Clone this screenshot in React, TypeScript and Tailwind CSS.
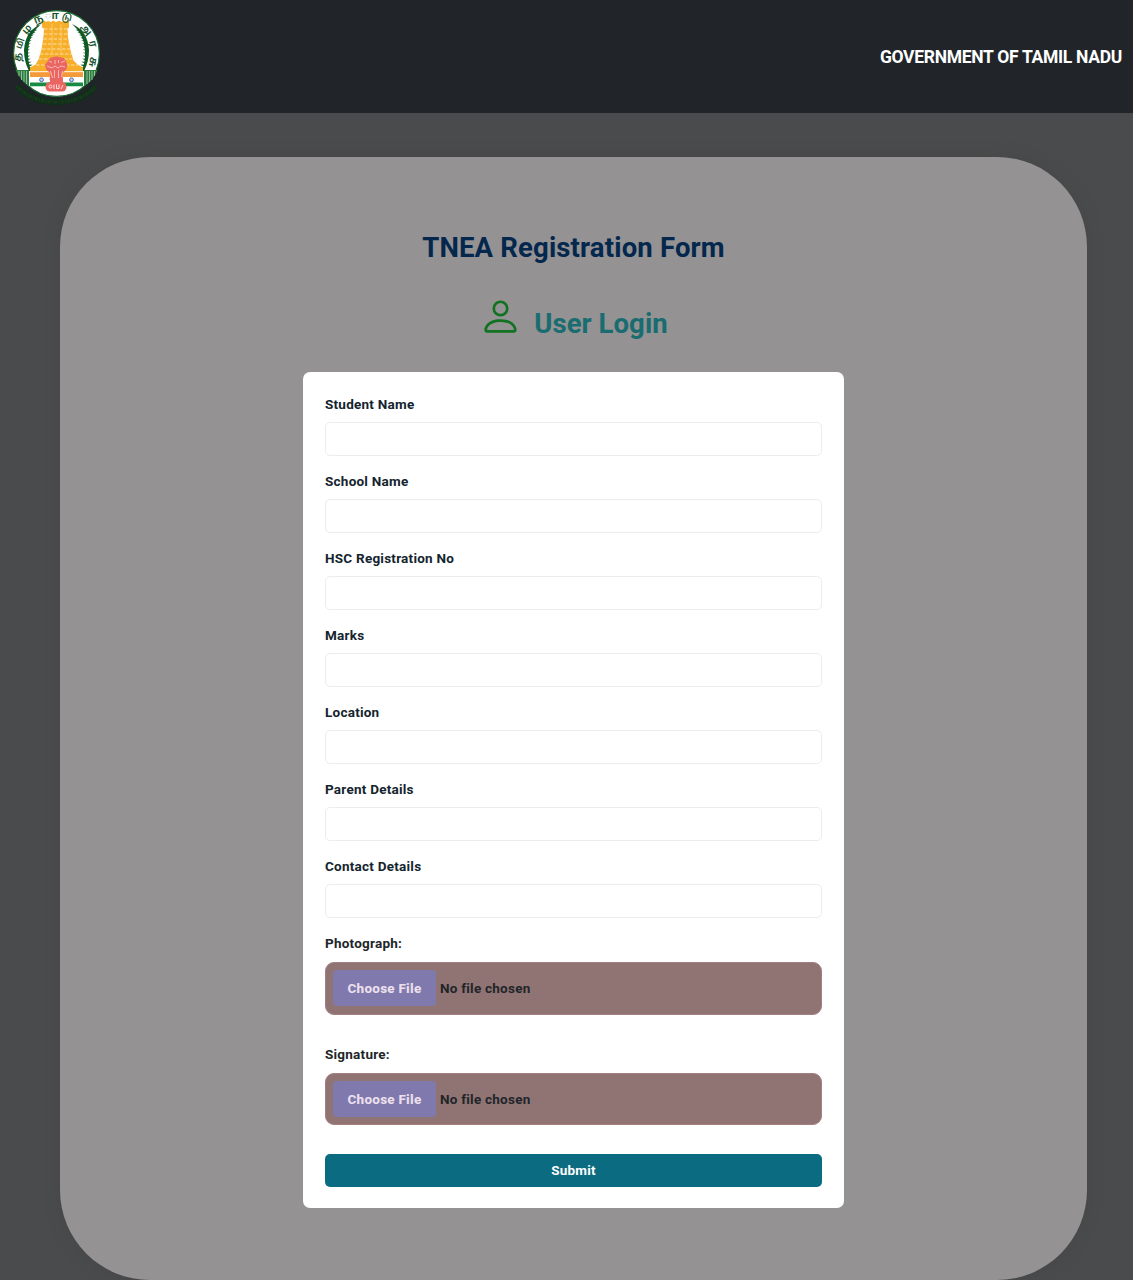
import React from "react";
import { BsPerson } from "react-icons/bs";

const fields = [
  "Student Name",
  "School Name",
  "HSC Registration No",
  "Marks",
  "Location",
  "Parent Details",
  "Contact Details",
];

const letters = [
  { t: "த", x: 18, y: 57, r: -85, s: 10 },
  { t: "மி", x: 20, y: 43.5, r: -68, s: 9 },
  { t: "ழ", x: 27, y: 29.5, r: -48, s: 10 },
  { t: "ந", x: 38.5, y: 19.5, r: -22, s: 11 },
  { t: "ா", x: 52, y: 15.5, r: 0, s: 11 },
  { t: "டு", x: 67, y: 17.5, r: 15, s: 9 },
  { t: "அ", x: 86, y: 30, r: 48, s: 10 },
  { t: "ர", x: 93, y: 44, r: 75, s: 10 },
  { t: "சு", x: 92.5, y: 62, r: 100, s: 11 },
];

function leaves(side: number) {
  const out = [];
  for (let i = 0; i < 14; i++) {
    const a = ((-42 + i * 5.6) * Math.PI) / 180;
    const x = 56.5 + side * 29 * Math.cos(a);
    const y = 52 + 32 * Math.sin(a);
    out.push(`M${x + side * 2} ${y + 1.3}l${-side * 4.5} -2.2l${side * 4.8} -.2z`);
  }
  return out.join("");
}

function Emblem() {
  return (
    <svg width="113" height="113" viewBox="0 0 113 113" className="shrink-0" aria-label="Emblem">
      <path d="M17 86Q31 102 56.5 102Q82 102 96 86" fill="none" stroke="#132c1b" strokeWidth="7" />
      <path d="M17 86Q31 102 56.5 102Q82 102 96 86" fill="none" stroke="#163a1b" strokeWidth="3.500" strokeDasharray="1.500 1 3 1" />
      <circle cx="56.5" cy="53.5" r="42.9" fill="#fff" stroke="#1b6b30" strokeWidth="1.2" />
      <path d="M15.500 70H29v16q-9-6-13.500-16zM84 70h13.500q-4 11-13.500 16z" fill="#2b7c3e" />
      <path d="M19 71v5M21.500 71v9M24 71v11M26.500 71v13M87 71v13M89.500 71v11M92 71v9M94.500 71v5" stroke="#c0dac6" strokeWidth=".7" />
      <path d="M41 24Q25 31 24 50Q24 62 29 71H31Q27.500 62 28 50Q29 34 41 24zM72 24Q88 31 89 50Q89 62 84 71H82Q85.500 62 85 50Q84 34 72 24z" fill="#0f5a26" />
      <path d={leaves(-1) + leaves(1)} fill="#0f5a26" />
      <path d="M44 20.500l2 1.500 2-1 3 1 2-1.500 3 1.500 3-1.500 3 1.500 3-1 2 1 2-1.500v7l-1.500 1 .500 9 2.500 13 3 10 4 4 5.500 3v5H30v-5l5.500-3 3-5 3-10 2-13 .5-8-2-1v-6z" fill="#f7ae2a" />
      <path d="M44 29h24M44 34h25M43.500 39h26M43 44h28M42 49h30M40 54h33M39 59h36M36 65h42" stroke="#fde7b0" strokeWidth=".9" strokeDasharray="3.500 1.500" />
      <path d="M52 24v31M61 24v31" stroke="#fbd07a" strokeWidth=".8" />
      <path d="M30 71.300h53v1H30z" fill="#fff" />
      <path d="M30 72.300h53v4.700H30z" fill="#f39a3a" />
      <path d="M30 77h53v5.500H30z" fill="#fff" />
      <path d="M30 82.500h53v3.700H30z" fill="#178a44" />
      <g fill="#c3d0ee" stroke="#4a68ae" strokeWidth="1">
        <circle cx="41.500" cy="79.800" r="1.900" />
        <circle cx="71.500" cy="79.800" r="1.900" />
      </g>
      <path d="M48.500 60q1-3 4-2.500 4-2 8 0 4-.5 5 2.500l2 5-1.500 5-4 3 1 7H49.500l1-7-4-3-1.500-5z" fill="#ea6663" />
      <rect x="45.500" y="82" width="21" height="9.500" rx="4.500" fill="#ea6663" />
      <path d="M50 78h13v5H50z" fill="#ea6663" />
      <path d="M49 61l3 1.500M61 62.500l4-1.500M55 60v4M58.500 60v3M47 66l5 2 3-2 3 2 3-2 4 1M50.500 71l2 7M54.500 70v8M58.500 70v8M62.500 71l-1 6" fill="none" stroke="#f8c0bc" strokeWidth=".9" />
      <path d="M49 86.500a1.500 1.500 0 1 0 3 0a1.500 1.500 0 1 0-3 0M54 84.500v4.500M56.500 84.500v4h2.500v-4M61 89l2-4" fill="none" stroke="#ffe0de" strokeWidth="1" />
      <g fill="#14502a" fontFamily="'Noto Sans Tamil', 'Noto Sans', sans-serif" fontWeight="600" textAnchor="middle">
        {letters.map((l) => (
          <text key={l.t} fontSize={l.s} transform={`translate(${l.x} ${l.y}) rotate(${l.r})`} dy="3">
            {l.t}
          </text>
        ))}
      </g>
    </svg>
  );
}

function FileField({ label }: { label: string }) {
  return (
    <div>
      <div className="h-[30px] leading-[22px]">{label}</div>
      <div className="flex h-[52.500px] items-center rounded-[9px] border border-[#a57e7e] bg-[#907474] pl-[7px]">
        <button className="h-9 w-[103px] rounded-[4px] bg-[#7f79ae] font-extrabold text-[#eadfea]">Choose File</button>
        <span className="ml-1 text-[#212529]">No file chosen</span>
      </div>
    </div>
  );
}

export default function App() {
  return (
    <div className="h-[1280px] w-[1133px] overflow-hidden bg-[#4a4b4c] font-['Roboto','Liberation_Sans',sans-serif] font-bold">
      <header className="flex h-[113px] items-center justify-between bg-[#212529] pr-[11px]">
        <Emblem />
        <span className="pt-[2px] text-[17.500px] tracking-[-0.3px] whitespace-nowrap text-white">GOVERNMENT OF TAMIL NADU</span>
      </header>
      <main className="mt-11 ml-[60px] flex h-[1123px] w-[1027px] flex-col items-center rounded-[90px] bg-[#949292] pt-[73px] shadow-[0_0_14px_#464748]">
        <h1 className="h-[34px] text-[27.500px] leading-[35px] tracking-[0.16px] whitespace-nowrap text-[#04274e]">TNEA Registration Form</h1>
        <div className="mt-[31px] flex h-[43px] items-start">
          <BsPerson className="h-[43px] w-[43px] text-[#117321]" />
          <h2 className="mt-[11px] ml-[12px] text-[27.500px] leading-[35px] tracking-[0.06px] whitespace-nowrap text-[#196c70]">User Login</h2>
        </div>
        <form className="mt-[34px] h-[836px] w-[541px] rounded-[7px] bg-white px-[22px] pt-[21px] text-[13.500px] tracking-[0.24px] text-[#212529]">
          {fields.map((label) => (
            <label key={label} className="block h-[77px] leading-[22px] text-[#14242e]">
              <span className="block h-[29px]">{label}</span>
              <input className="block h-[34px] w-full rounded-[5px] border border-[#ededef] bg-white px-3 outline-none" />
            </label>
          ))}
          <div className="flex flex-col gap-[28px]">
            <FileField label="Photograph:" />
            <FileField label="Signature:" />
          </div>
          <button className="mt-[29px] block h-[32.500px] w-full rounded-[5px] bg-[#0b6b80] text-white">Submit</button>
        </form>
      </main>
    </div>
  );
}
